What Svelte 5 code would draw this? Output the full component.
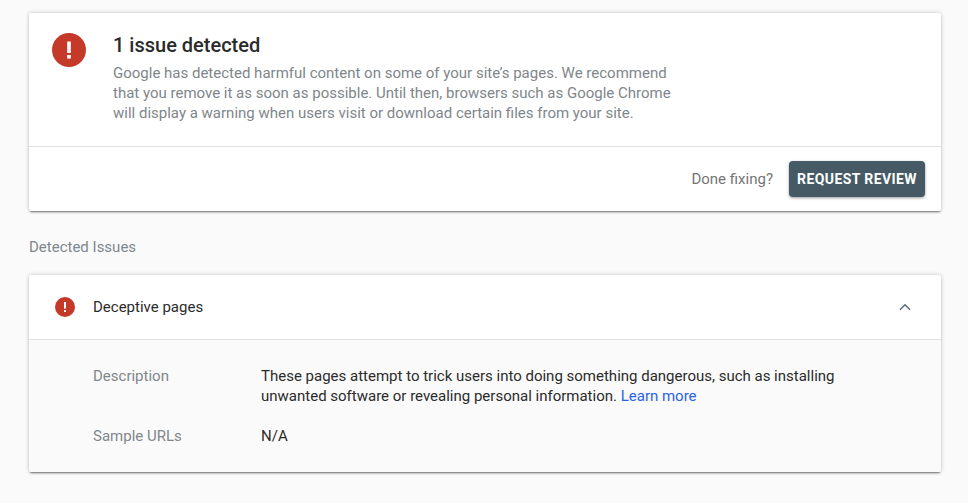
<script>
  const title = '1 issue detected';
</script>

<main class="page">
  <section class="card summary">
    <div class="summary-top">
      <svg class="alert big" viewBox="0 0 34 34" aria-hidden="true">
        <circle cx="17" cy="17" r="17" fill="#c53929" />
        <rect x="15.2" y="8.5" width="3.6" height="11.5" fill="#fff" />
        <rect x="15.2" y="22" width="3.6" height="3.6" fill="#fff" />
      </svg>
      <div class="summary-text">
        <h1>{title}</h1>
        <p>
          Google has detected harmful content on some of your site’s pages. We recommend
          that you remove it as soon as possible. Until then, browsers such as Google Chrome
          will display a warning when users visit or download certain files from your site.
        </p>
      </div>
    </div>
    <div class="summary-actions">
      <span class="done">Done fixing?</span>
      <button>REQUEST REVIEW</button>
    </div>
  </section>

  <h2>Detected Issues</h2>

  <section class="card issue">
    <div class="issue-head">
      <svg class="alert small" viewBox="0 0 20 20" aria-hidden="true">
        <circle cx="10" cy="10" r="10" fill="#c53929" />
        <rect x="9" y="5" width="2" height="6.6" fill="#fff" />
        <rect x="9" y="13" width="2" height="2" fill="#fff" />
      </svg>
      <span class="issue-name">Deceptive pages</span>
      <svg class="chevron" viewBox="0 0 12 8" aria-hidden="true">
        <path d="M1 6.8 L6 1.8 L11 6.8" fill="none" stroke="#5f7078" stroke-width="1.6" />
      </svg>
    </div>
    <div class="issue-body">
      <div class="row">
        <span class="label">Description</span>
        <span class="value">
          These pages attempt to trick users into doing something dangerous, such as installing
          unwanted software or revealing personal information. <a href="#learn">Learn more</a>
        </span>
      </div>
      <div class="row">
        <span class="label">Sample URLs</span>
        <span class="value">N/A</span>
      </div>
    </div>
  </section>
</main>

<style>
  :global(body) {
    background: #fafafa;
    font-family: Roboto, 'Liberation Sans', sans-serif;
  }

  .page {
    padding: 13px 27px 31px 29px;
  }

  .card {
    background: #fff;
    border-radius: 2px;
    box-shadow: 0 2px 2px -1px rgba(0, 0, 0, 0.5), 0 0 4px rgba(0, 0, 0, 0.22);
  }

  .summary-top {
    display: flex;
    height: 134px;
    box-sizing: border-box;
    padding: 20px 0 0 23px;
    border-bottom: 1px solid #e0e0e0;
  }

  .alert {
    flex: none;
    display: block;
  }

  .big {
    width: 34px;
    height: 34px;
  }

  .summary-text {
    margin-left: 27px;
  }

  h1 {
    margin: 0;
    font-size: 20px;
    font-weight: 500;
    line-height: 24px;
    color: #2b2b2b;
  }

  .summary-text p {
    margin: 6px 0 0;
    width: 570px;
    font-size: 15px;
    line-height: 20px;
    color: #80868b;
  }

  .summary-actions {
    display: flex;
    align-items: center;
    justify-content: flex-end;
    height: 64px;
    padding-right: 16px;
  }

  .done {
    font-size: 15px;
    color: #757575;
    margin-right: 16px;
  }

  button {
    width: 136px;
    height: 36px;
    padding: 0 0 1px;
    border: 0;
    border-radius: 4px;
    background: #455a64;
    color: #fff;
    font-family: inherit;
    font-size: 14px;
    font-weight: 700;
    letter-spacing: 0.4px;
    box-shadow: 0 1px 3px rgba(0, 0, 0, 0.4);
  }

  h2 {
    margin: 27px 0 19px;
    font-size: 15px;
    font-weight: 400;
    line-height: 18px;
    color: #80868b;
  }

  .issue-head {
    display: flex;
    align-items: center;
    height: 64px;
    padding: 0 30px 0 26px;
    border-bottom: 1px solid #e0e0e0;
  }

  .small {
    width: 20px;
    height: 20px;
  }

  .issue-name {
    margin-left: 18px;
    font-size: 15px;
    color: #2b2b2b;
    flex: 1;
  }

  .chevron {
    width: 12px;
    height: 8px;
  }

  .issue-body {
    background: #fafafa;
    padding: 26px 64px 26px;
    display: flex;
    flex-direction: column;
    gap: 20px;
    border-radius: 0 0 2px 2px;
  }

  .row {
    display: flex;
    font-size: 15px;
    line-height: 20px;
  }

  .label {
    flex: none;
    width: 168px;
    color: #80868b;
  }

  .value {
    color: #2b2b2b;
    width: 600px;
  }

  a {
    color: #2a62e8;
    text-decoration: none;
  }
</style>
